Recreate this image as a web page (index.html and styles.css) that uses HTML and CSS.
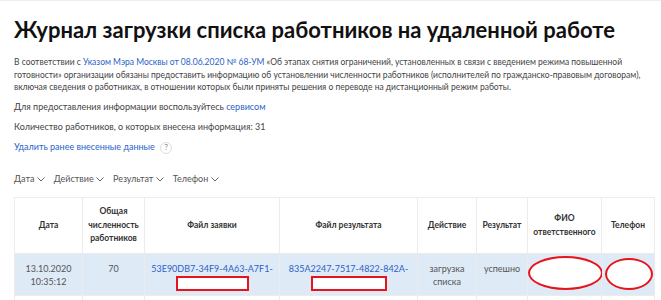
FILE: index.html
```
<!DOCTYPE html>
<html lang="ru">
<head>
    <meta charset="UTF-8">
    <meta name="viewport" content="width=device-width, initial-scale=1.0">
    <title>Журнал загрузки списка работников</title>
    <link rel="stylesheet" href="styles.css">
</head>
<body>
    <div class="page">
        <h1>Журнал загрузки списка работников на удаленной работе</h1>

        <p class="intro">В соответствии с <a href="#">Указом Мэра Москвы от 08.06.2020 № 68-УМ</a> «Об этапах снятия ограничений, установленных в связи с введением режима повышенной готовности» организации обязаны предоставить информацию об установлении численности работников (исполнителей по гражданско-правовым договорам), включая сведения о работниках, в отношении которых были приняты решения о переводе на дистанционный режим работы.</p>

        <p class="info">Для предоставления информации воспользуйтесь <a href="#">сервисом</a></p>
        <p class="info">Количество работников, о которых внесена информация: 31</p>
        <p class="info"><a href="#">Удалить ранее внесенные данные</a> <span class="hint">?</span></p>

        <div class="filters">
            <span class="filter">Дата <svg width="8" height="5" viewBox="0 0 8 5"><path d="M0.5 0.5l3.5 3.5l3.5-3.5" fill="none" stroke="#666" stroke-width="1"/></svg></span>
            <span class="filter">Действие <svg width="8" height="5" viewBox="0 0 8 5"><path d="M0.5 0.5l3.5 3.5l3.5-3.5" fill="none" stroke="#666" stroke-width="1"/></svg></span>
            <span class="filter">Результат <svg width="8" height="5" viewBox="0 0 8 5"><path d="M0.5 0.5l3.5 3.5l3.5-3.5" fill="none" stroke="#666" stroke-width="1"/></svg></span>
            <span class="filter">Телефон <svg width="8" height="5" viewBox="0 0 8 5"><path d="M0.5 0.5l3.5 3.5l3.5-3.5" fill="none" stroke="#666" stroke-width="1"/></svg></span>
        </div>

        <table class="log">
            <colgroup>
                <col style="width:68px">
                <col style="width:62px">
                <col style="width:135px">
                <col style="width:138px">
                <col style="width:59px">
                <col style="width:51px">
                <col style="width:74px">
                <col style="width:53px">
            </colgroup>
            <thead>
                <tr>
                    <th>Дата</th>
                    <th>Общая численность работников</th>
                    <th>Файл заявки</th>
                    <th>Файл результата</th>
                    <th>Действие</th>
                    <th>Результат</th>
                    <th>ФИО ответственного</th>
                    <th>Телефон</th>
                </tr>
            </thead>
            <tbody>
                <tr class="active">
                    <td>13.10.2020<br>10:35:12</td>
                    <td>70</td>
                    <td><a href="#">53E90DB7-34F9-4A63-A7F1-</a><br><span class="mask-box mask-req"></span></td>
                    <td><a href="#">835A2247-7517-4822-842A-</a><br><span class="mask-box mask-res"></span></td>
                    <td>загрузка<br>списка</td>
                    <td>успешно</td>
                    <td class="masked"><span class="mask-oval oval-fio"></span></td>
                    <td class="masked"><span class="mask-oval oval-phone"></span></td>
                </tr>
                <tr>
                    <td>&nbsp;</td><td></td><td></td><td></td><td></td><td></td><td></td><td></td>
                </tr>
            </tbody>
        </table>
    </div>
</body>
</html>
```

FILE: styles.css
```
body {
    margin: 0;
    font-family: Lato, "Open Sans", sans-serif;
    color: #333;
    background: #fff;
    overflow: hidden;
}
.page {
    padding: 0 0 0 14px;
    border-top: 1px solid #eee;
}
h1 {
    margin: 15px 0 12px;
    font-size: 22px;
    font-weight: 700;
    color: #111;
    line-height: 28px;
}
a {
    color: #2a62c9;
    text-decoration: none;
}
.intro {
    margin: 0 0 7.5px;
    font-size: 8.5px;
    line-height: 12.5px;
    color: #444;
}
.info {
    margin: 0 0 7.5px;
    font-size: 9px;
    line-height: 12.5px;
    color: #444;
}
.hint {
    display: inline-block;
    width: 10px;
    height: 10px;
    border: 1px solid #ddd;
    border-radius: 50%;
    font-size: 7.5px;
    line-height: 10px;
    text-align: center;
    color: #777;
    margin-left: 3px;
}
.filters {
    display: flex;
    gap: 9px;
    margin: 17px 0 10px;
    font-size: 9px;
    line-height: 16px;
    color: #555;
}
.filter svg {
    vertical-align: middle;
}
.log {
    border-collapse: collapse;
    table-layout: fixed;
    width: 640px;
}
.log th, .log td {
    border: 1px solid #ececec;
    text-align: center;
    padding: 0 3px;
}
.log th {
    height: 55px;
    vertical-align: middle;
    font-size: 8.5px;
    font-weight: 700;
    color: #333;
    line-height: 13.5px;
}
.log td {
    height: 33px;
    padding-top: 8px;
    vertical-align: top;
    font-size: 9px;
    color: #555;
    line-height: 13px;
}
.log tr.active td {
    background: #deeaf6;
}
.mask-box {
    display: inline-block;
    height: 11px;
    border: 2px solid #e8141c;
    background: #fff;
    margin-top: 1px;
    vertical-align: top;
}
.mask-req { width: 69px; }
.mask-res { width: 72px; }
.masked {
    position: relative;
}
.mask-oval {
    position: absolute;
    border: 2px solid #e8141c;
    border-radius: 50%;
    background: #fff;
}
.oval-fio {
    left: 0;
    top: 2px;
    width: 71px;
    height: 30px;
}
.oval-phone {
    left: 3px;
    top: 4px;
    width: 44px;
    height: 28px;
}
```
